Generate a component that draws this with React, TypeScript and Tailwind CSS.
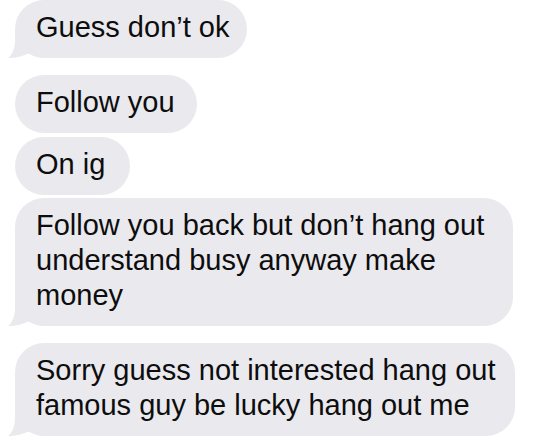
import React from "react";

function Tail() {
  return (
    <svg
      className="absolute left-[-7px] bottom-0"
      width="40"
      height="30"
      viewBox="0 0 40 30"
    >
      <path
        d="M7 0 L7 12 C7 21 4 27 0 30 C8 30 15 28 22 25 C27 28 32 30 40 30 L40 0 Z"
        fill="#e9e9ee"
      />
    </svg>
  );
}

function Bubble({
  children,
  w,
  tail,
  mt,
}: {
  children: React.ReactNode;
  w: string;
  tail?: boolean;
  mt: string;
}) {
  return (
    <div className={`relative ${mt} ${w}`}>
      {tail && <Tail />}
      <div className="relative rounded-[29px] bg-[#e9e9ee] pl-[21px] pt-[10px] pb-[13px] text-[29px] leading-[35px] text-[#0d0d0d] whitespace-nowrap">
        {children}
      </div>
    </div>
  );
}

export default function App() {
  return (
    <div
      className="w-[535px] h-[440px] overflow-hidden bg-white pl-[15px] flex flex-col items-start"
      style={{ fontFamily: '"Liberation Sans", Arial, sans-serif' }}
    >
      <Bubble w="w-[232px]" mt="mt-0" tail>
        Guess don’t ok
      </Bubble>
      <Bubble w="w-[182px]" mt="mt-[17px]">
        Follow you
      </Bubble>
      <Bubble w="w-[115px]" mt="mt-[4px]">
        On ig
      </Bubble>
      <Bubble w="w-[498px]" mt="mt-[3px]" tail>
        Follow you back but don’t hang out
        <br />
        understand busy anyway make
        <br />
        money
      </Bubble>
      <Bubble w="w-[500px]" mt="mt-[17px]" tail>
        Sorry guess not interested hang out
        <br />
        famous guy be lucky hang out me
      </Bubble>
    </div>
  );
}
